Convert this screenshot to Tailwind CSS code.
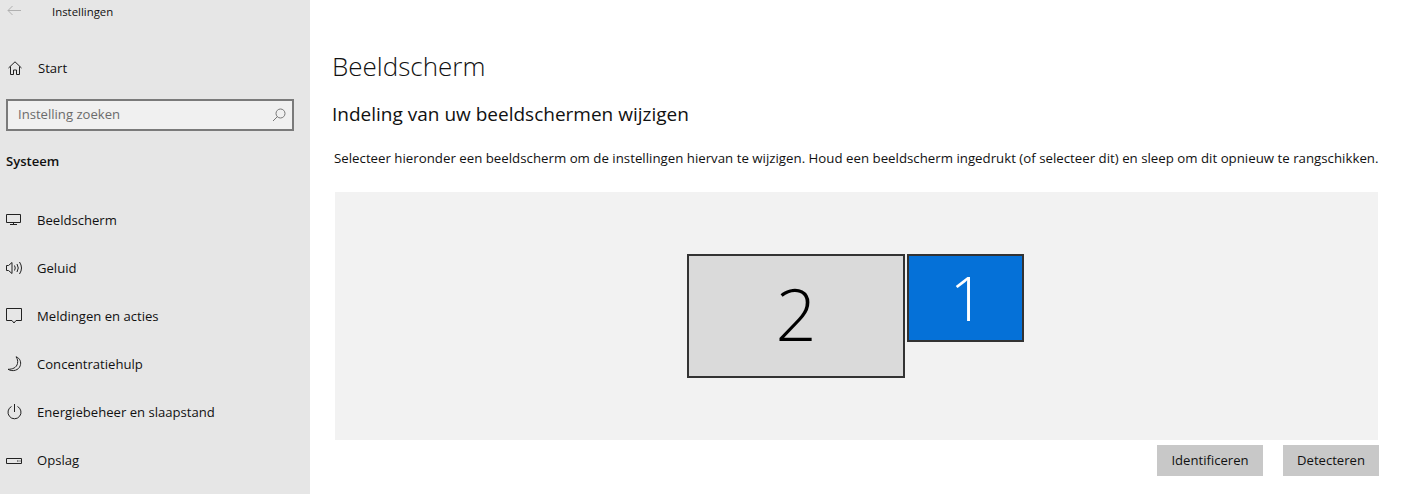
<!DOCTYPE html>
<html lang="nl">
<head>
  <meta charset="UTF-8" />
  <meta name="viewport" content="width=device-width, initial-scale=1.0"/>
  <title>Instellingen</title>
  <script src="https://cdn.jsdelivr.net/npm/@tailwindcss/browser@4"></script>
</head>
<body class="bg-white text-[#111] h-[494px] w-[1407px] overflow-hidden flex font-['Open_Sans',sans-serif]">
  <!-- sidebar -->
  <aside class="w-[310px] h-full shrink-0 bg-[#e6e6e6] text-[13.1px]">
    <div class="h-[24px] flex items-center pl-[7px]">
      <svg class="mb-[3px]" width="14" height="11" viewBox="0 0 14 11" fill="none" stroke="#b0b0b0" stroke-width="1"><path d="M14 5.500H1M5.500 1L1 5.500l4.500 4.500"/></svg>
      <span class="ml-[31px] text-[11.4px]">Instellingen</span>
    </div>
    <div class="h-[40px] mt-[25px] flex items-center pl-[8px]">
      <svg class="mb-[2px]" width="14" height="14" viewBox="0 0 14 14" fill="none" stroke="#222" stroke-width="1"><path d="M.5 7L7 .8 13.500 7M2.500 5.500v8h3V9h3v4.500h3v-8"/></svg>
      <span class="ml-[16px]">Start</span>
    </div>
    <div class="ml-[6px] mr-[16px] mt-[10px] h-[32px] border-2 border-[#7a7a7a] bg-[#f0f0f0] flex items-center justify-between pl-[10px] pr-[6px] text-[#6b6b6b]">
      <span>Instelling zoeken</span>
      <svg width="14" height="14" viewBox="0 0 14 14" fill="none" stroke="#777" stroke-width="1"><circle cx="8.500" cy="5.500" r="4.500"/><path d="M5.500 8.500L1 13"/></svg>
    </div>
    <div class="mt-[21px] pl-[6px] h-[18px] leading-[18px] font-semibold">Systeem</div>
    <nav class="mt-[27px] flex flex-col">
      <div class="h-[48px] flex items-center">
        <div class="w-[37px] pl-[6px] shrink-0 mb-[4px]"><svg class="block" width="15" height="11" viewBox="0 0 15 11" fill="none" stroke="#222" stroke-width="1"><path d="M.5.500h14v8H.5zM7.500 8.500V10.500M4 10.500h7"/></svg></div>
        <span>Beeldscherm</span>
      </div>
      <div class="h-[48px] flex items-center">
        <div class="w-[37px] pl-[6px] shrink-0 mb-[2px]"><svg class="block" width="16" height="14" viewBox="0 0 16 14" fill="none" stroke="#222" stroke-width="1"><path d="M.5 4.500h2L6 1.500v11L2.500 9.500h-2zM8.500 4.500q1.500 2.500 0 5M11 3q2.500 4 0 8M13.500 1q4 6 0 12"/></svg></div>
        <span>Geluid</span>
      </div>
      <div class="h-[48px] flex items-center">
        <div class="w-[37px] pl-[6px] shrink-0 mb-[2px]"><svg class="block" width="16" height="16" viewBox="0 0 16 16" fill="none" stroke="#222" stroke-width="1"><path d="M.5.500h15v12H10L8 15l-2-2.500H.5z"/></svg></div>
        <span>Meldingen en acties</span>
      </div>
      <div class="h-[48px] flex items-center">
        <div class="w-[37px] pl-[7px] shrink-0 mb-[2px]"><svg class="block" width="15" height="16" viewBox="0 0 15 16" fill="none" stroke="#222" stroke-width="1"><path d="M9 .8c4 1.200 5.500 5.500 4.200 9C11.800 14 6 16.200 1 13.300c4.500 0 8.500-1.500 9.500-5.800.5-2.500 0-4.700-1.500-6.700z"/></svg></div>
        <span>Concentratiehulp</span>
      </div>
      <div class="h-[48px] flex items-center">
        <div class="w-[37px] pl-[7px] shrink-0 mb-[2px]"><svg class="block" width="15" height="16" viewBox="0 0 15 16" fill="none" stroke="#222" stroke-width="1"><path d="M7.500 0v8M4.500 2.500a6.500 6.500 0 1 0 6 0"/></svg></div>
        <span>Energiebeheer en slaapstand</span>
      </div>
      <div class="h-[48px] flex items-center">
        <div class="w-[37px] pl-[6px] shrink-0 mb-[1px]"><svg class="block" width="16" height="6" viewBox="0 0 16 6" fill="none" stroke="#222" stroke-width="1"><path d="M.5.500h15v5H.5zM11 3h1.500M13.500 3H14.500"/></svg></div>
        <span>Opslag</span>
      </div>
    </nav>
  </aside>

  <!-- content -->
  <main class="flex-1 pl-[22px]">
    <h1 class="mt-[47px] h-[38px] leading-[38px] text-[26px] font-light">Beeldscherm</h1>
    <h2 class="mt-[14px] h-[30px] leading-[30px] text-[19px]">Indeling van uw beeldschermen wijzigen</h2>
    <p class="mt-[19px] ml-[2px] h-[20px] leading-[20px] text-[13.27px] whitespace-nowrap">Selecteer hieronder een beeldscherm om de instellingen hiervan te wijzigen. Houd een beeldscherm ingedrukt (of selecteer dit) en sleep om dit opnieuw te rangschikken.</p>
    <div class="mt-[24px] ml-[3px] w-[1043px] h-[248px] bg-[#f2f2f2] pt-[62px] pl-[352px] flex items-start gap-[2px]">
      <div class="w-[218px] h-[124px] border-2 border-[#333] bg-[#dadada] flex items-center justify-center pb-[7px] text-[72px] font-light text-black">2</div>
      <div class="w-[117px] h-[88px] border-2 border-[#333] bg-[#0571d8] flex items-center justify-center pl-[3px] text-[60px] font-light text-white">1</div>
    </div>
    <div class="mt-[5px] w-[1047px] flex justify-end gap-[20px] text-[13.1px]">
      <button class="w-[106px] h-[31px] bg-[#c8c8c8]">Identificeren</button>
      <button class="w-[96px] h-[31px] bg-[#c8c8c8]">Detecteren</button>
    </div>
  </main>
</body>
</html>
